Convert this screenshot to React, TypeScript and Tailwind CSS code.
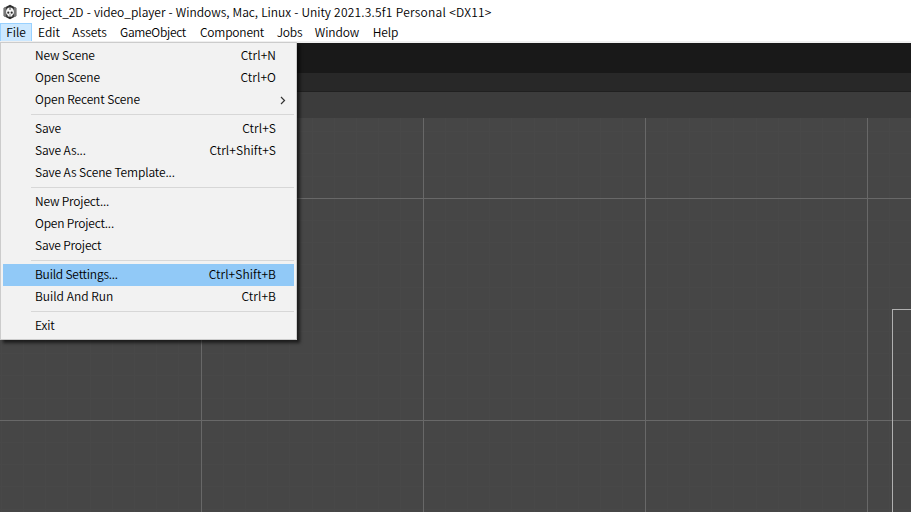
import React from "react";

type Entry = { label: string; shortcut?: string; submenu?: boolean; active?: boolean; tracking?: string };

const groups: Entry[][] = [
  [
    { label: "New Scene", shortcut: "Ctrl+N" },
    { label: "Open Scene", shortcut: "Ctrl+O" },
    { label: "Open Recent Scene", submenu: true },
  ],
  [
    { label: "Save", shortcut: "Ctrl+S" },
    { label: "Save As...", shortcut: "Ctrl+Shift+S" },
    { label: "Save As Scene Template..." },
  ],
  [{ label: "New Project...", tracking: "tracking-[-0.18px]" }, { label: "Open Project...", tracking: "tracking-[-0.2px]" }, { label: "Save Project", tracking: "tracking-[-0.18px]" }],
  [
    { label: "Build Settings...", shortcut: "Ctrl+Shift+B", active: true, tracking: "tracking-[-0.2px]" },
    { label: "Build And Run", shortcut: "Ctrl+B", tracking: "tracking-[0px]" },
  ],
  [{ label: "Exit" }],
];

const menus = [
  { label: "File", width: "w-8", active: true },
  { label: "Edit", width: "w-[34px]" },
  { label: "Assets", width: "w-[47px] tracking-[-0.1px]" },
  { label: "GameObject", width: "w-20 tracking-[-0.3px]" },
  { label: "Component", width: "w-[78px] tracking-[-0.2px]" },
  { label: "Jobs", width: "w-[37px] tracking-[-0.2px]" },
  { label: "Window", width: "w-[58px] tracking-[-0.1px]" },
  { label: "Help", width: "w-[39px] tracking-[-0.1px]" },
];

function UnityIcon() {
  return (
    <svg className="h-4 w-4 shrink-0" viewBox="0 0 16 16">
      <path d="M8 .7 14.300 4v8L8 15.300 1.700 12V4Z" fill="#2c2c2c" />
      <path d="M1.700 4 4.200 2.700v10.600l-2.500-1.300ZM14.300 4 11.800 2.700v10.600l2.500-1.300Z" fill="#777" />
      <path d="M8 3.600C10.500 3.600 12 5.500 12 8c0 2-1 2.800-1.700 3.200V12.400H5.700V11.200C5 10.800 4 10 4 8c0-2.500 1.500-4.400 4-4.400Z" fill="#f5f5f5" />
      <circle cx="6.300" cy="8.700" r="1.100" fill="#2c2c2c" />
      <circle cx="9.700" cy="8.700" r="1.100" fill="#2c2c2c" />
      <path d="M8 3.600V6M7.400 11h1.200" stroke="#2c2c2c" strokeWidth=".9" />
    </svg>
  );
}

function MenuRow({ entry }: { entry: Entry }) {
  return (
    <div className={`flex h-[22px] items-center justify-between pb-[2px] pl-8 ${entry.active ? "bg-[#91c9f7]" : ""} ${entry.submenu ? "pr-2" : "pr-[18px]"}`}>
      <span className={entry.tracking ?? "tracking-[-0.11px]"}>{entry.label}</span>
      {entry.shortcut && <span className="tracking-[0.08px]">{entry.shortcut}</span>}
      {entry.submenu && (
        <svg className="mt-[2px] h-[9px] w-[6px]" viewBox="0 0 6 9" fill="none" stroke="#333" strokeWidth="1.200">
          <path d="m1 1 3.500 3.500L1 8" />
        </svg>
      )}
    </div>
  );
}

function SceneView() {
  const minor = Array.from({ length: 42 }, (_, i) => i * 22.2 + 1.2);
  return (
    <svg className="block h-[394px] w-full bg-[#464646]" viewBox="0 118 911 394" shapeRendering="crispEdges">
      {minor.map((v) => (
        <path key={v} d={`M${v} 118V512M0 ${v - 2.800}H911`} stroke="#484848" />
      ))}
      <path d="M201.500 118V512M423.500 118V512M645.500 118V512M867.500 118V512M0 198.500H911M0 420.500H911" stroke="#686868" />
      <path d="M892.500 512V309.500H911" fill="none" stroke="#b0b0b0" />
    </svg>
  );
}

export default function App() {
  return (
    <div className="relative flex h-[512px] w-[911px] flex-col overflow-hidden bg-white font-['Noto_Sans_CJK_KR',sans-serif] text-[12px] leading-[22px] font-[350] whitespace-nowrap text-black">
      <header className="flex h-[23px] shrink-0 items-center pl-[2px]">
        <UnityIcon />
        <span className="ml-[5px] whitespace-pre">
          <span className="tracking-[-0.03px] [word-spacing:0.5px]">Project_2D - video_player - Windows, Mac, Linux - Unity </span>
          <span className="tracking-[0.22px] [word-spacing:0.3px]">2021.3.5f1 Personal &lt;DX11&gt;</span>
        </span>
      </header>
      <nav className="flex h-[18px] shrink-0">
        {menus.map((m) => (
          <span key={m.label} className={`flex h-[19px] shrink-0 items-center justify-center pb-[2px] ${m.width} ${m.active ? "border border-[#99d1ff] bg-[#cce8ff]" : ""}`}>
            {m.label}
          </span>
        ))}
      </nav>
      <div className="h-[2px] shrink-0 bg-[#f0f0f0]" />
      <div className="h-[30px] shrink-0 bg-[#191919]" />
      <div className="h-[19px] shrink-0 border-b border-[#202020] bg-[#282828]" />
      <div className="h-[26px] shrink-0 bg-[#3c3c3c]" />
      <SceneView />
      <div className="absolute top-[42px] left-0 h-[298px] w-[297px] border border-[#cccccc] bg-[#f2f2f2] px-[2px] py-[2px] shadow-[3px_3px_3px_rgba(0,0,0,0.6)]">
        {groups.map((group, i) => (
          <React.Fragment key={group[0].label}>
            {i > 0 && <div className="ml-7 h-[7px] pt-[3px]"><div className="h-px bg-[#d7d7d7]" /></div>}
            {group.map((entry) => <MenuRow key={entry.label} entry={entry} />)}
          </React.Fragment>
        ))}
      </div>
    </div>
  );
}
